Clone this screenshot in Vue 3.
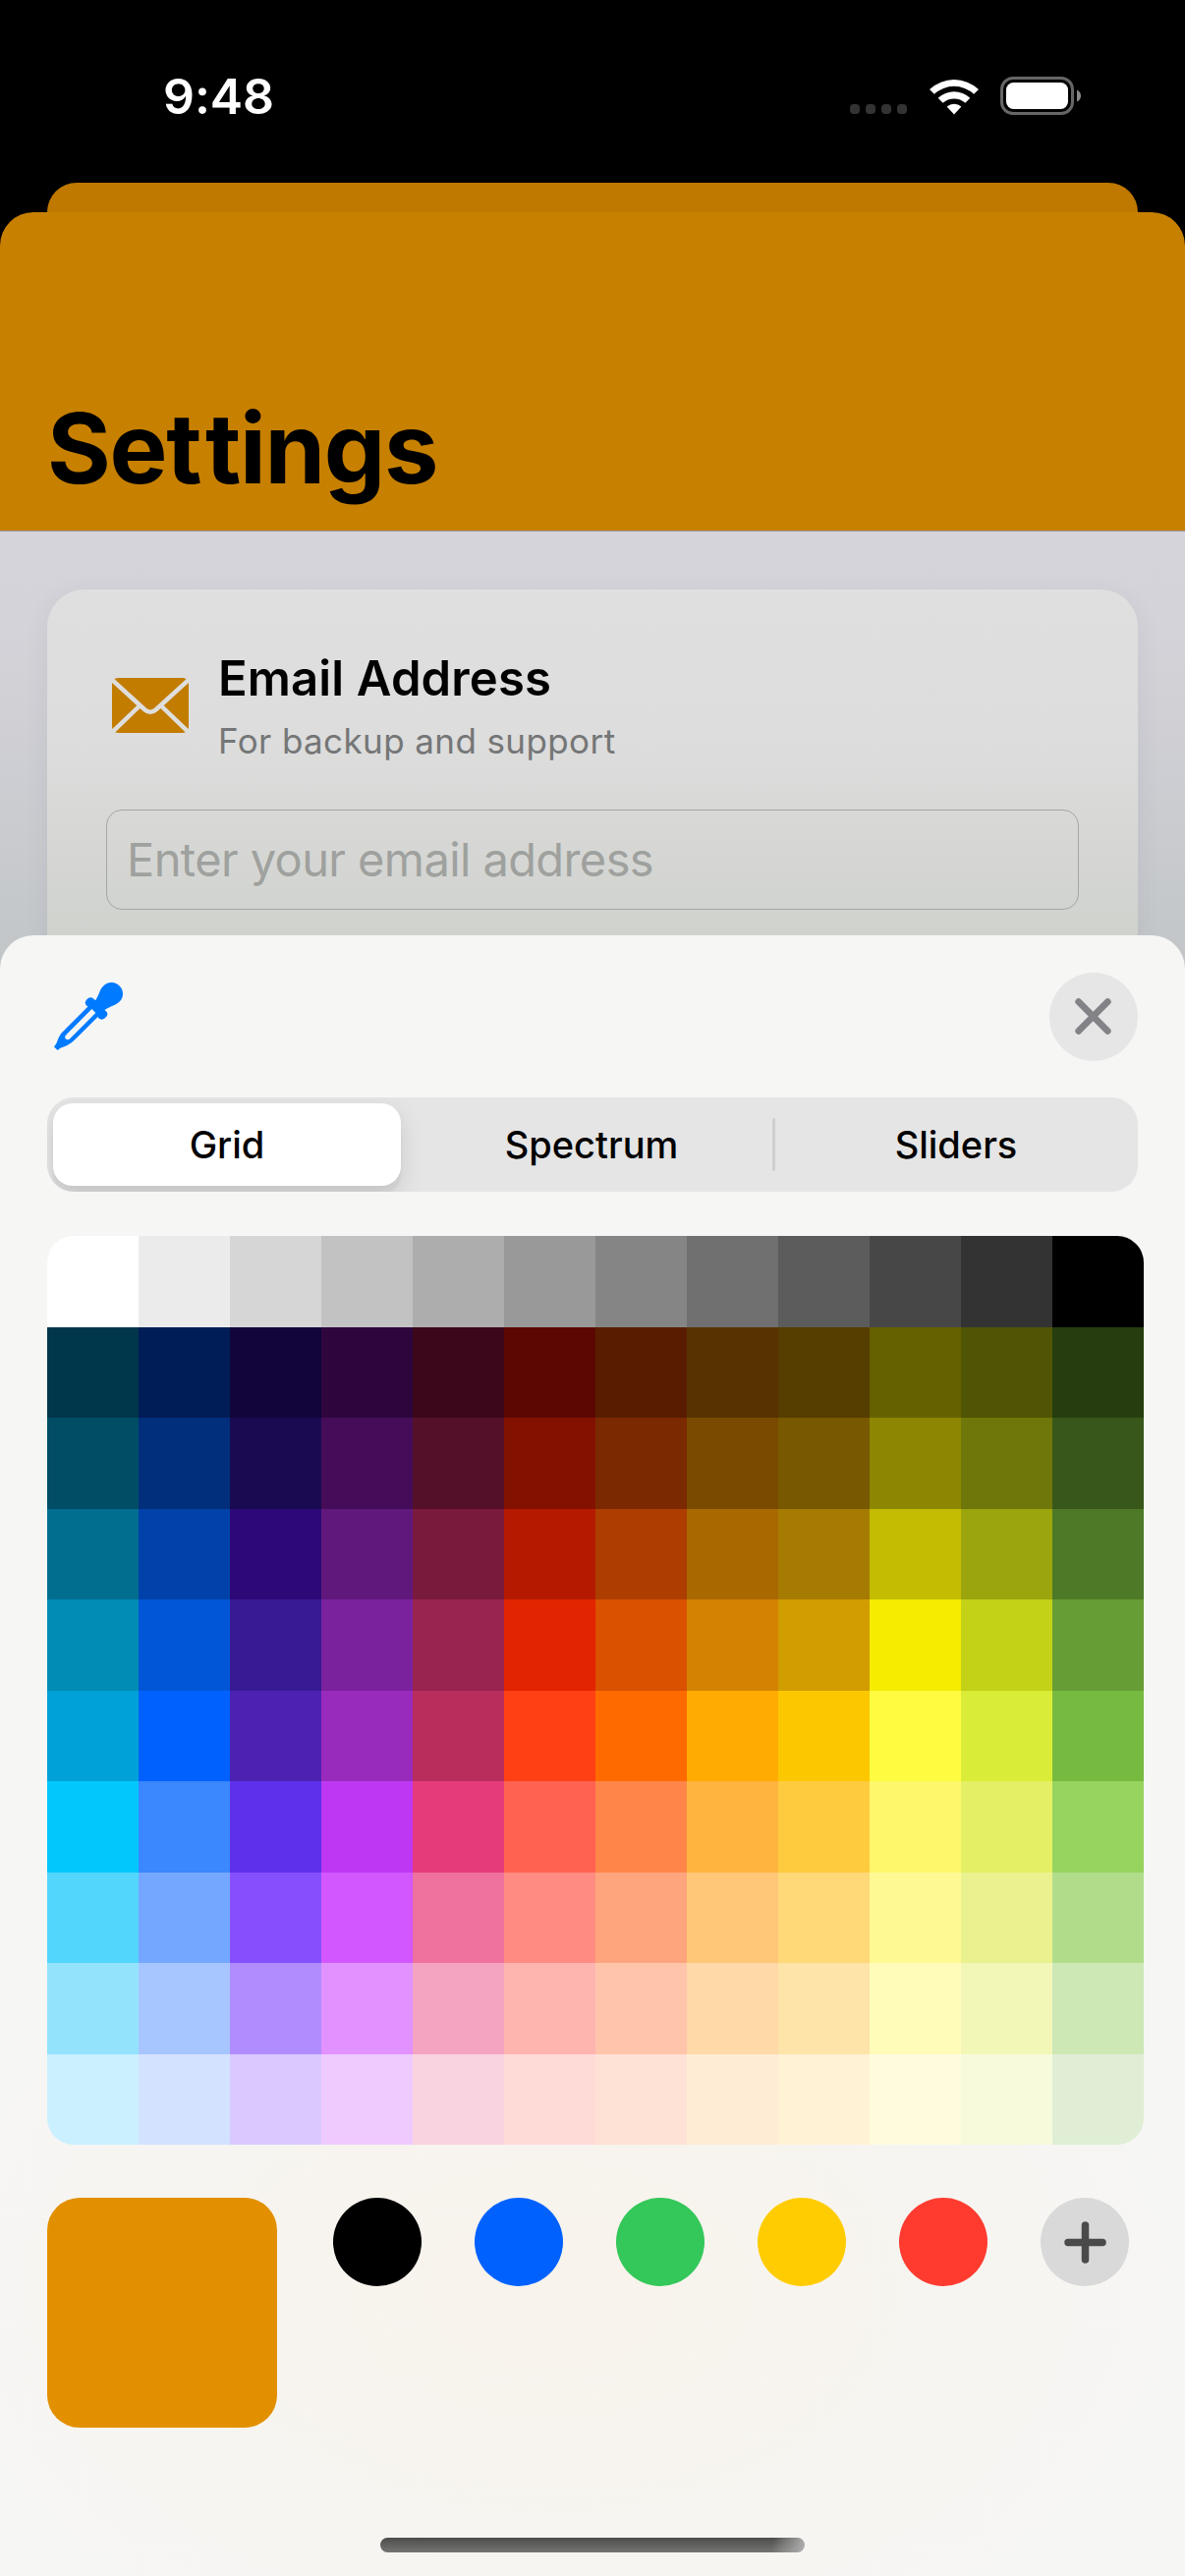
<template>
  <div class="screen">
    <div class="status-bar">
      <span class="time">9:48</span>
      <div class="status-icons">
        <div class="cell-dots">
          <i v-for="n in 4" :key="n"></i>
        </div>
        <svg class="wifi" width="52" height="38" viewBox="0 0 52 38">
          <path d="M1 12 A36.5 36.5 0 0 1 51 12 L46.2 16.8 A29.6 29.6 0 0 0 5.8 16.8 Z" />
          <path d="M9.7 20.8 A23.8 23.8 0 0 1 42.3 20.8 L37.4 25.8 A17.3 17.3 0 0 0 14.6 25.8 Z" />
          <path d="M18.6 29.6 A11.2 11.2 0 0 1 33.4 29.6 L26 37.4 Z" />
        </svg>
        <svg class="battery" width="83" height="39" viewBox="0 0 83 39">
          <rect x="1.5" y="1.5" width="72" height="36" rx="11.5" class="battery-shell" />
          <rect x="6" y="6" width="63" height="27" rx="7.5" fill="#fff" />
          <path d="M78 13.5 Q82 15.5 82 19.5 Q82 23.5 78 25.5 Z" fill="#8a8a8a" />
        </svg>
      </div>
    </div>

    <div class="back-sheet"></div>

    <header class="nav">
      <h1>Se<span class="loose">t</span>tings</h1>
    </header>

    <main class="content">
      <section class="card">
        <div class="card-head">
          <svg class="mail" width="78" height="56" viewBox="0 0 78 56">
            <rect width="78" height="56" rx="6" fill="#c27c00" />
            <path d="M-1 1 L33.5 32.5 Q39 37 44.5 32.5 L79 1" />
            <path d="M0 55.5 L28.5 28 M78 55.5 L49.5 28" />
          </svg>
          <div class="card-titles">
            <div class="card-title">Email Address</div>
            <div class="card-sub">For backup and support</div>
          </div>
        </div>
        <div class="field"><span>Enter your email address</span></div>
      </section>
    </main>

    <section class="picker">
      <div class="toolbar">
        <svg class="dropper" width="70" height="70" viewBox="0 0 70 70">
          <path d="M47 8 Q51.5 0 58 0 A11.7 11.7 0 0 1 70 12 Q70 18.5 62.5 22.5 Q55 25.5 51.5 28 Q56 31 53.5 34.5 L51.5 36.5 Q48.5 38.8 45.5 36.5 L44.6 35 L23 56.6 Q18.5 61.5 13 64.3 L6.5 66.7 L3.6 69 L0 65.5 L2.3 62.3 L4.8 56 Q6.8 51.5 11.5 47.5 L34.5 24.5 L33 23.5 Q30.5 20.5 33 17.7 Q36.3 14 39.5 16 L42 18.3 Q44 16 47 8 Z" />
          <path class="glass" d="M40.4 29 L14.5 55" />
          <circle class="glass-end" cx="13.9" cy="55.6" r="2.7" />
        </svg>
        <button class="close">
          <svg width="37" height="37" viewBox="0 0 37 37">
            <path d="M3.7 3.7 L33.3 33.3 M33.3 3.7 L3.7 33.3" />
          </svg>
        </button>
      </div>

      <div class="segments">
        <div
          v-for="tab in tabs"
          :key="tab"
          class="segment"
          :class="{ active: tab === activeTab }"
        >
          <span>{{ tab }}</span>
        </div>
      </div>

      <div class="color-grid">
        <div v-for="(row, r) in palette" :key="r" class="color-row">
          <div
            v-for="color in row"
            :key="color"
            class="color-cell"
            :style="{ background: '#' + color }"
          ></div>
        </div>
      </div>

      <div class="saved">
        <div class="current"></div>
        <div class="swatches">
          <div
            v-for="color in swatches"
            :key="color"
            class="swatch"
            :style="{ background: color }"
          ></div>
          <div class="swatch add">
            <svg width="43" height="43" viewBox="0 0 43 43">
              <path d="M21.5 4 V39 M4 21.5 H39" />
            </svg>
          </div>
        </div>
      </div>

      <div class="home-indicator"></div>
    </section>
  </div>
</template>

<script setup>
import { ref } from 'vue'

const tabs = ['Grid', 'Spectrum', 'Sliders']
const activeTab = ref('Grid')

// one string per row, 12 colors each
const palette = [
  'FFFFFF EBEBEB D6D6D6 C2C2C2 ADADAD 999999 858585 707070 5C5C5C 474747 333333 000000',
  '00374A 011D57 11053B 2E063D 3C071B 5C0701 5A1C00 583300 563D00 666100 4F5504 263E0F',
  '004D65 012F7B 1A0A52 450D59 551029 831100 7B2900 7A4A00 785800 8D8602 6F760A 38571A',
  '016E8F 0042A9 2C0977 61187C 791A3D B51A00 AD3E00 A96800 A67B01 C4BC00 9BA50E 4E7A27',
  '008CB4 0056D6 371A94 7A219E 99244F E22400 DA5100 D38301 D19D01 F5EC00 C3D117 669D34',
  '00A1D8 0061FE 4D22B2 982ABC B92D5D FF4015 FF6A00 FFAB01 FDC700 FEFB41 D9EC37 76BB40',
  '01C7FC 3A87FE 5E30EB BE38F3 E63B7A FF6250 FF8648 FEB43F FECB3E FFF76B E4EF65 96D35F',
  '52D6FC 74A7FF 864FFE D357FE EE719E FF8C82 FFA57D FFC777 FFD977 FFF994 EAF28F B1DD8B',
  '93E3FD A7C6FF B18CFE E292FE F4A4C0 FFB5AF FFC5AB FFD9A8 FEE4A8 FFFBB9 F2F7B7 CDE8B5',
  'CBF0FF D3E2FF D9C9FE EFCAFF F9D3E0 FFDBD8 FFE2D6 FFECD4 FFF2D5 FEFCDD F7FADB DFEED4',
].map((row) => row.split(' '))

const swatches = ['#000000', '#0061fe', '#34c759', '#ffcc02', '#ff3b30']
</script>

<style>
body {
  margin: 0;
  background: #000;
}
</style>

<style scoped>
.screen {
  width: 1206px;
  height: 2622px;
  display: flex;
  flex-direction: column;
  overflow: hidden;
  background: #000;
  font-family: Inter, "Liberation Sans", sans-serif;
}

.status-bar {
  height: 186px;
  flex-shrink: 0;
  display: flex;
  justify-content: space-between;
  align-items: flex-start;
  box-sizing: border-box;
  padding: 78px 105px 0 166px;
}

.time {
  color: #fff;
  font-size: 50px;
  line-height: 40px;
  font-weight: 600;
  letter-spacing: -0.1px;
}

.status-icons {
  display: flex;
  align-items: flex-start;
}

.cell-dots {
  display: flex;
  gap: 6px;
  margin: 28px 22px 0 0;
}

.cell-dots i {
  width: 10px;
  height: 10px;
  border-radius: 4px;
  background: #333;
}

.wifi {
  fill: #fff;
  margin: 1px 21px 0 0;
}

.battery-shell {
  fill: none;
  stroke: #666;
  stroke-width: 3;
}

.back-sheet {
  height: 30px;
  flex-shrink: 0;
  margin: 0 48px;
  border-radius: 30px 30px 0 0;
  background: #bf7900;
}

.nav {
  height: 324px;
  flex-shrink: 0;
  box-sizing: border-box;
  display: flex;
  align-items: flex-end;
  padding: 0 48px 24px;
  border-radius: 34px 34px 0 0;
  background: #c78000;
}

.nav h1 {
  margin: 0;
  font-size: 99px;
  line-height: 120px;
  font-weight: 700;
  letter-spacing: -1.3px;
}

.nav .loose {
  letter-spacing: 3.5px;
}

.content {
  height: 462px;
  flex-shrink: 0;
  box-sizing: border-box;
  padding: 59px 48px 0;
  overflow: hidden;
  border-top: 1px solid #98979f;
  background: linear-gradient(#d5d4da 0, #d4d3d9 100px, #cccdd2 260px, #c2c6c8 430px);
}

.card {
  height: 440px;
  box-sizing: border-box;
  padding: 60px 60px 0;
  border-radius: 38px;
  background: linear-gradient(#dfdfdf 0, #dddddd 150px, #d8d9d7 230px, #d0d2ce 350px);
  box-shadow: 0 6px 24px rgba(60, 60, 100, 0.08);
}

.card-head {
  display: flex;
  align-items: flex-start;
  height: 164px;
}

.mail {
  margin: 30px 30px 0 6px;
}

.mail path {
  fill: none;
  stroke: #dededd;
  stroke-width: 4.5;
}

.card-title {
  padding-top: 1px;
  font-size: 49px;
  line-height: 60px;
  font-weight: 600;
  letter-spacing: 0.15px;
}

.card-sub {
  margin-top: 11px;
  font-size: 35px;
  line-height: 44px;
  letter-spacing: 0.4px;
  color: #757677;
}

.field {
  height: 102px;
  box-sizing: border-box;
  border: 1px solid #a5a7a4;
  border-radius: 16px;
  padding-left: 20px;
  font-size: 47px;
  line-height: 100px;
  letter-spacing: -0.6px;
  color: #9fa19e;
}

.picker {
  position: relative;
  z-index: 1;
  flex: 1;
  min-height: 0;
  margin-top: -50px;
  padding: 38px 48px 0;
  display: flex;
  flex-direction: column;
  border-radius: 34px 34px 0 0;
  background:
    radial-gradient(ellipse 700px 440px at 560px 1380px, #f8f3eb 0, rgba(248, 243, 235, 0) 100%),
    #f6f6f5;
}

.toolbar {
  height: 127px;
  flex-shrink: 0;
  display: flex;
  justify-content: space-between;
  align-items: flex-start;
}

.dropper {
  margin: 10px 0 0 7px;
  fill: #007aff;
}

.dropper .glass {
  stroke: #f6f6f5;
  stroke-width: 5.4;
}

.dropper .glass-end {
  fill: #f6f6f5;
}

.close {
  width: 90px;
  height: 90px;
  padding: 0;
  border: 0;
  border-radius: 50%;
  background: #e6e6e6;
  display: flex;
  align-items: center;
  justify-content: center;
}

.close svg {
  margin: 0 1px 1px 0;
  fill: none;
  stroke: #838287;
  stroke-width: 6.8;
  stroke-linecap: round;
}

.segments {
  height: 96px;
  flex-shrink: 0;
  box-sizing: border-box;
  padding: 6px;
  display: flex;
  gap: 17px;
  overflow: hidden;
  border-radius: 27px;
  background: #e5e5e5;
}

.segment {
  position: relative;
  width: 354px;
  flex-shrink: 0;
  display: flex;
  align-items: center;
  justify-content: center;
  border-radius: 20px;
  font-size: 38px;
  font-weight: 500;
}

.segment.active {
  background: #fff;
  box-shadow: 0 9px 24px rgba(0, 0, 0, 0.12), 0 9px 3px rgba(0, 0, 0, 0.04);
}

.segment + .segment + .segment::before {
  content: "";
  position: absolute;
  left: -10px;
  top: 15px;
  width: 3px;
  height: 54px;
  border-radius: 2px;
  background: #cfcfd2;
}

.color-grid {
  width: 1116px;
  height: 925px;
  flex-shrink: 0;
  margin-top: 45px;
  display: flex;
  flex-direction: column;
  border-radius: 27px;
  overflow: hidden;
}

.color-row {
  display: flex;
  height: 92px;
}

.color-row:nth-child(odd) {
  height: 93px;
}

.color-cell {
  width: 93px;
}

.saved {
  margin-top: 54px;
  display: flex;
  align-items: flex-start;
  gap: 57px;
}

.current {
  width: 234px;
  height: 234px;
  border-radius: 33px;
  background: #e29000;
}

.swatches {
  display: flex;
  gap: 54px;
}

.swatch {
  width: 90px;
  height: 90px;
  border-radius: 50%;
}

.swatch.add {
  display: flex;
  align-items: center;
  justify-content: center;
  background: #d9d9d9;
}

.swatch.add svg {
  fill: none;
  stroke: #4a4a4a;
  stroke-width: 7.5;
  stroke-linecap: round;
}

.home-indicator {
  width: 432px;
  height: 15px;
  flex-shrink: 0;
  margin: auto auto 24px;
  border-radius: 8px;
  background:
    linear-gradient(100deg, rgba(180, 180, 180, 0) 92%, #b0b0b0 100%),
    linear-gradient(#4c4d4b, #757473);
}
</style>
